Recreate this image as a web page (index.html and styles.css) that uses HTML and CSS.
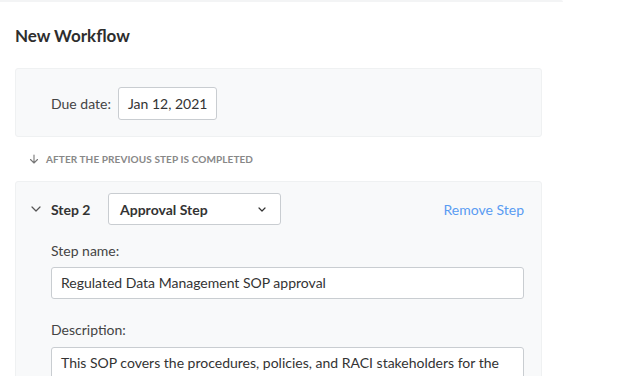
FILE: index.html
```html
<!DOCTYPE html>
<html lang="en">

  <head>
    <meta charset="UTF-8">
    <meta name="viewport" content="width=device-width, initial-scale=1.0">
    <title>New Workflow</title>
    <link rel="stylesheet" href="styles.css">
  </head>

  <body>
    <div class="topline"></div>
    <div class="page">
      <h1 class="title">New Workflow</h1>

      <!-- due date -->
      <div class="panel due">
        <span class="label">Due date:</span>
        <div class="input date">Jan 12, 2021</div>
      </div>

      <div class="after">
        <svg width="10" height="10" viewBox="0 0 10 10">
          <path d="M5 1v8M1.5 5.5L5 9l3.5-3.5" fill="none" stroke="#777" stroke-width="1.1" stroke-linecap="round" stroke-linejoin="round" />
        </svg>
        <span>After the previous step is completed</span>
      </div>

      <!-- step 2 -->
      <div class="panel step">
        <div class="step_head">
          <svg class="toggle" width="10" height="6" viewBox="0 0 10 6">
            <path d="M1 1l4 4 4-4" fill="none" stroke="#555" stroke-width="1.2" stroke-linecap="round" stroke-linejoin="round" />
          </svg>
          <span class="step_no">Step 2</span>
          <div class="select">
            <span>Approval Step</span>
            <svg width="8" height="5" viewBox="0 0 8 5">
              <path d="M1 1l3 3 3-3" fill="none" stroke="#333" stroke-width="1.2" stroke-linecap="round" stroke-linejoin="round" />
            </svg>
          </div>
          <a class="remove" href="#">Remove Step</a>
        </div>

        <div class="field">
          <div class="label">Step name:</div>
          <div class="input">Regulated Data Management SOP approval</div>
        </div>

        <div class="field">
          <div class="label">Description:</div>
          <div class="input area">This SOP covers the procedures, policies, and RACI stakeholders for the</div>
        </div>
      </div>
    </div>
  </body>

</html>
```

FILE: styles.css
```css
* {
  margin: 0;
  padding: 0;
  box-sizing: border-box;
}

body {
  background-color: #fff;
  font-family: Lato, "Open Sans", sans-serif;
  color: #333;
  overflow: hidden;
}

.topline {
  width: 563px;
  height: 2px;
  background-color: #f3f4f5;
  border-top-right-radius: 4px;
}

.page {
  padding: 0 0 0 15px;
  width: 542px;
}

.title {
  font-size: 17px;
  font-weight: 700;
  line-height: 22px;
  margin-top: 23px;
  color: #2e2e2e;
}

.panel {
  background-color: #f8f9fa;
  border: 1px solid #eff1f2;
  border-radius: 3px;
}

.label {
  font-size: 14px;
  color: #444;
}

.input {
  background-color: #fff;
  border: 1px solid #c9cdd1;
  border-radius: 3px;
  font-size: 14px;
  color: #333;
  height: 32px;
  line-height: 30px;
  padding: 0 9px;
  white-space: nowrap;
}

.due {
  margin-top: 21px;
  height: 69px;
  display: flex;
  align-items: center;
  gap: 7px;
  padding: 2px 0 0 35px;
}

.date {
  width: 99px;
  height: 33px;
  line-height: 31px;
}

.after {
  display: flex;
  align-items: center;
  gap: 7px;
  padding-left: 14px;
  height: 44px;
  font-size: 10px;
  font-weight: 700;
  text-transform: uppercase;
  color: #888;
  letter-spacing: 0.1px;
}

.step {
  padding: 11px 17px 0 35px;
  height: 220px;
}

.step_head {
  display: flex;
  align-items: center;
  height: 32px;
}

.toggle {
  margin-left: -20px;
  margin-right: 10px;
}

.step_no {
  font-size: 14px;
  font-weight: 700;
  width: 57px;
}

.select {
  width: 173px;
  height: 32px;
  border: 1px solid #c9cdd1;
  border-radius: 3px;
  background-color: #fff;
  display: flex;
  align-items: center;
  justify-content: space-between;
  padding: 0 14px 0 11px;
  font-size: 14px;
  font-weight: 700;
}

.remove {
  margin-left: auto;
  font-size: 14px;
  color: #5a9cf2;
  text-decoration: none;
}

.field .label {
  margin: 18px 0 8px;
  height: 16px;
  line-height: 16px;
}

.field + .field .label {
  margin: 23px 0 9px;
}

.area {
  height: 60px;
}
```
